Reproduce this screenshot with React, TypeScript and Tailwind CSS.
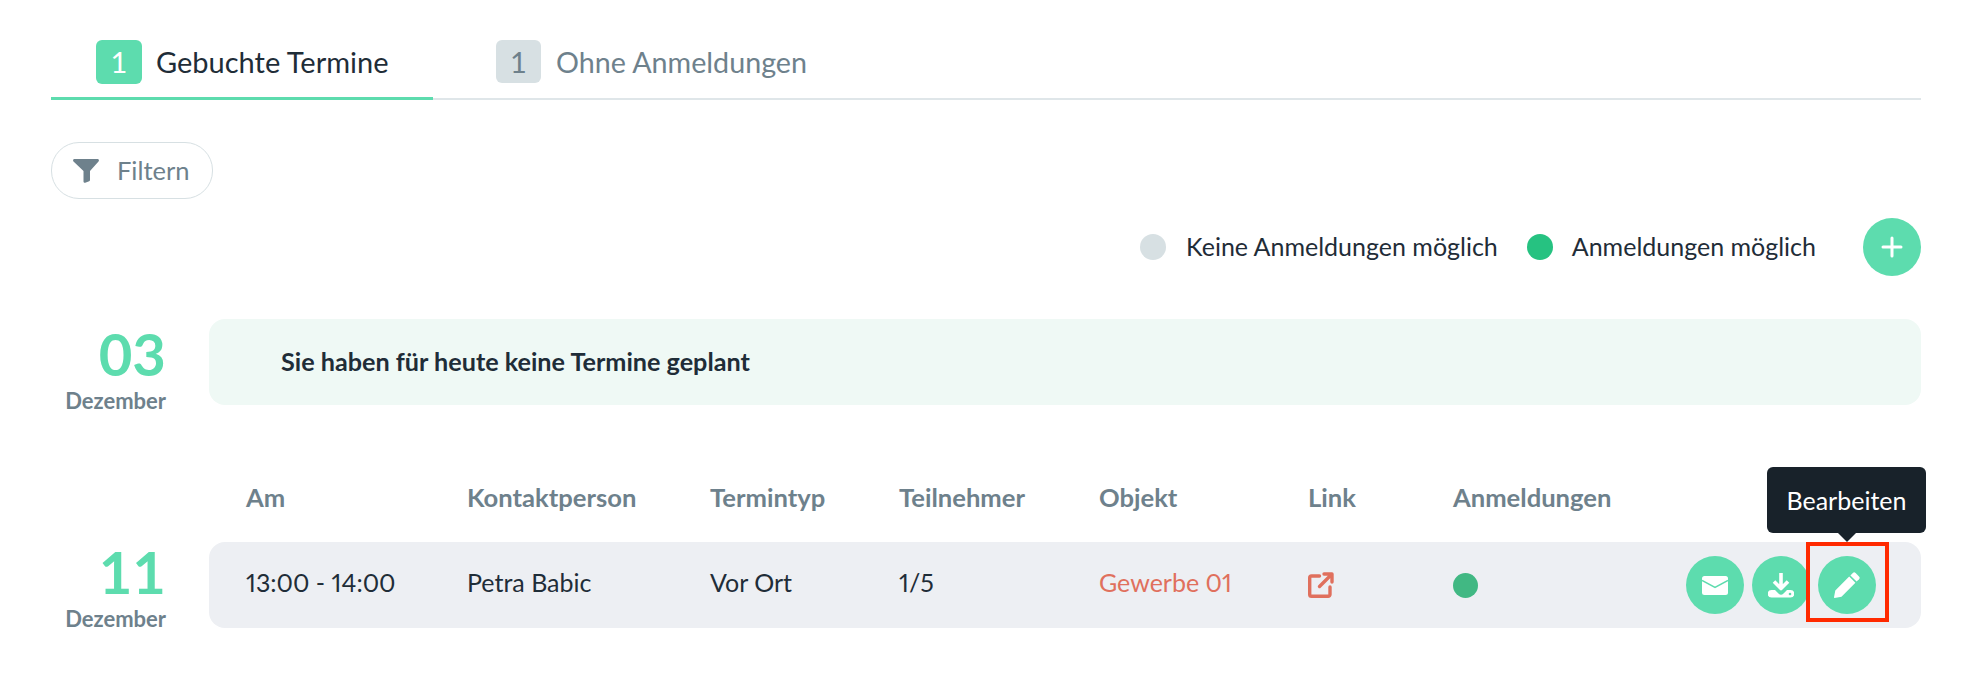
import React from 'react';

const columns = 'grid grid-cols-[221px_243px_189px_200px_209px_145px_1fr] pl-[37px] items-center';

function DateLabel({ day, className }: { day: string; className: string }) {
  return (
    <div className={`w-[158px] h-[86px] shrink-0 pr-[43px] text-right ${className}`}>
      <div className="text-[58px] leading-[58px] font-bold text-[#5ddcae]">{day}</div>
      <div className="mt-[5px] text-[22px] leading-[26px] font-bold text-[#6e818c]">Dezember</div>
    </div>
  );
}

function RoundButton({ children }: { children: React.ReactNode }) {
  return (
    <div className="w-[58px] h-[58px] rounded-full bg-[#5ddcae] flex items-center justify-center">
      {children}
    </div>
  );
}

export default function App() {
  const heads = ['Am', 'Kontaktperson', 'Termintyp', 'Teilnehmer', 'Objekt', 'Link', 'Anmeldungen'];
  const cells = ['13:00 - 14:00', 'Petra Babic', 'Vor Ort', '1/5'];

  return (
    <div className="w-[1984px] h-[688px] bg-white pl-[51px] pr-[63px] pt-[40px] overflow-hidden font-['Lato',sans-serif] text-[#1f2d38]">
      <div className="flex h-[60px] border-b-2 border-[#dfe6e9]">
        <div className="w-[382px] h-[60px] pl-[45px] flex items-start gap-[14px] border-b-[3px] border-[#5ddcae]">
          <span className="w-[46px] h-[44px] rounded-[6px] bg-[#5ddcae] text-white text-[29px] leading-[44px] text-center">1</span>
          <span className="text-[29px] leading-[44px]">Gebuchte Termine</span>
        </div>
        <div className="pl-[63px] flex items-start gap-[15px]">
          <span className="w-[45px] h-[43px] rounded-[6px] bg-[#d7e0e3] text-[#6e818c] text-[29px] leading-[43px] text-center">1</span>
          <span className="text-[28.700px] leading-[44px] text-[#6e818c]">Ohne Anmeldungen</span>
        </div>
      </div>

      <div className="mt-[42px] w-[162px] h-[57px] rounded-[28px] border border-[#d7e0e3] flex items-center pl-[21px] gap-[18px]">
        <svg width="26" height="24" viewBox="0 0 26 24" fill="#6e818c">
          <path d="M1.500 0h23c1.300 0 1.900 1.500 1 2.400L17 12v9c0 .6-.3 1-.8 1.300l-4 1.500c-.8.2-1.700-.4-1.700-1.300V12L.5 2.400C-.4 1.500.2 0 1.500 0z" />
        </svg>
        <span className="text-[25.500px] text-[#6e818c]">Filtern</span>
      </div>

      <div className="mt-[19px] h-[58px] flex items-center justify-end text-[25px]">
        <span className="w-[26px] h-[26px] rounded-full bg-[#d7e0e3]" />
        <span className="ml-[20px]">Keine Anmeldungen möglich</span>
        <span className="ml-[29px] w-[26px] h-[26px] rounded-full bg-[#26c281]" />
        <span className="ml-[19px]">Anmeldungen möglich</span>
        <div className="ml-[47px] w-[58px] h-[58px] rounded-full bg-[#5ddcae] flex items-center justify-center">
          <svg width="22" height="22" viewBox="0 0 22 22" stroke="white" strokeWidth="3" strokeLinecap="round">
            <path d="M11 2v18M2 11h18" />
          </svg>
        </div>
      </div>

      <div className="mt-[43px] flex">
        <DateLabel day="03" className="pt-[6px]" />
        <div className="flex-1 h-[86px] rounded-[16px] bg-[#eff9f5] pl-[72px] flex items-center text-[25.200px] font-bold">
          Sie haben für heute keine Termine geplant
        </div>
      </div>

      <div className={`mt-[67px] ml-[158px] h-[50px] ${columns} text-[25.600px] font-bold text-[#6e818c]`}>
        {heads.map((h) => (
          <span key={h}>{h}</span>
        ))}
      </div>

      <div className="mt-[20px] flex">
        <DateLabel day="11" className="pt-[1px]" />
        <div className={`relative flex-1 h-[86px] rounded-[16px] bg-[#edeff3] ${columns} text-[25px] proportional-nums`}>
          {cells.map((c) => (
            <span key={c} className="pb-[4px]">{c}</span>
          ))}
          <span className="pb-[4px] text-[#e0705d]">Gewerbe 01</span>
          <svg width="26" height="26" viewBox="0 0 26 26" fill="none" stroke="#e0705d" strokeWidth="3.400" strokeLinecap="round" strokeLinejoin="round">
            <path d="M11.500 4H3.500a1.800 1.800 0 0 0-1.800 1.800v16.700a1.800 1.800 0 0 0 1.800 1.800h16.700a1.800 1.800 0 0 0 1.800-1.800V15" />
            <path d="M11.500 14.500 23 3M16 2h8v8" />
          </svg>
          <div className="flex items-center justify-between pr-[45px]">
            <span className="w-[25px] h-[25px] rounded-full bg-[#41b883]" />
            <div className="flex gap-[8px]">
              <RoundButton>
                <svg width="26" height="19" viewBox="0 0 26 19" fill="white">
                  <rect width="26" height="19" rx="2.500" />
                  <path d="M0 4.500 13 11.500 26 4.500" fill="none" stroke="#5ddcae" strokeWidth="1.500" />
                </svg>
              </RoundButton>
              <RoundButton>
                <svg width="26" height="26" viewBox="0 0 26 26">
                  <path d="M13 1v15M6 9.500l7 7 7-7" fill="none" stroke="white" strokeWidth="3.600" strokeLinejoin="round" />
                  <path d="M3.500 18h3.500l3.500 3.500a3.500 3.500 0 0 0 5 0L19 18h3.500a3.500 3.500 0 0 1 0 7.500h-19a3.750 3.750 0 0 1 0-7.500z" fill="white" />
                  <circle cx="22" cy="22" r="1.300" fill="#5ddcae" />
                </svg>
              </RoundButton>
              <RoundButton>
                <svg width="26" height="26" viewBox="0 0 26 26" fill="white">
                  <path d="M18.800 1a2 2 0 0 1 2.800 0l3.400 3.400a2 2 0 0 1 0 2.800l-2.400 2.400-6.200-6.200z" />
                  <path d="M15.200 4.600 21.400 10.800 7.500 24.700.6 26c-.4 0-.7-.3-.6-.7L1.300 18.500z" />
                </svg>
              </RoundButton>
            </div>
          </div>

          <div className="absolute left-[1558px] -top-[75px] w-[159px] h-[66px] pt-[2px] rounded-[6px] bg-[#18222a] text-white text-[25px] flex items-center justify-center">
            Bearbeiten
            <span className="absolute left-[71px] top-[66px] w-0 h-0 border-l-[9px] border-r-[9px] border-t-[9px] border-l-transparent border-r-transparent border-t-[#18222a]" />
          </div>
          <div className="absolute left-[1597px] top-0 w-[83px] h-[80px] border-[4px] border-[#ff2a00]" />
        </div>
      </div>
    </div>
  );
}
